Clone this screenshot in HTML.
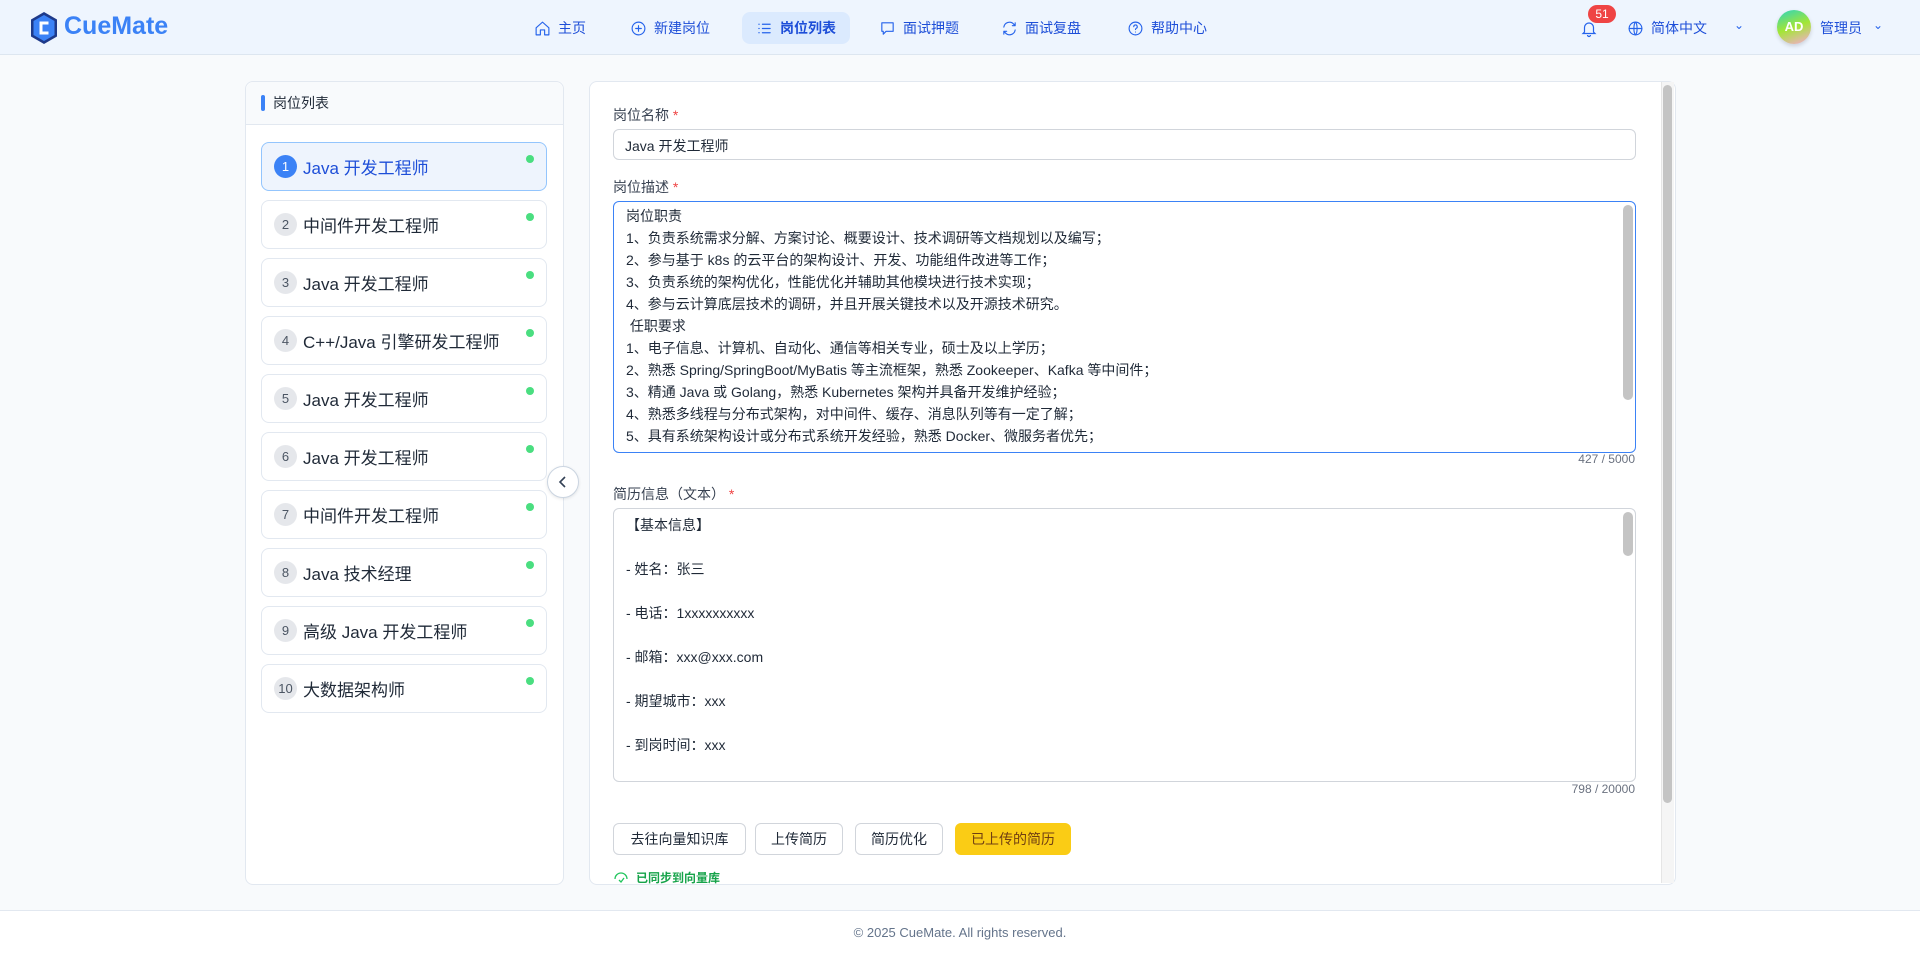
<!DOCTYPE html>
<html><head><meta charset="utf-8"><style>
*{box-sizing:border-box;margin:0;padding:0}
body{width:1920px;height:958px;overflow:hidden;background:#f8fafc;font-family:"Liberation Sans","Noto Sans CJK SC",sans-serif;color:#1f2937;position:relative}
.a{position:absolute}
.hdr{left:0;top:0;width:1920px;height:55px;background:#eef5fe;border-bottom:1px solid #dde6f0}
.nav{top:12px;height:32px;display:flex;align-items:center;font-size:14px;color:#1d4ed8;gap:7px}
.nav svg{width:17px;height:17px;fill:none;stroke:#2563eb;stroke-width:1.6;stroke-linecap:round;stroke-linejoin:round}
.panel{background:#fff;border:1px solid #e2e8f0;border-radius:8px}
.item{left:261px;width:286px;height:49px;border:1px solid #e2e8f0;border-radius:8px;background:#fff;display:flex;align-items:center;padding-left:12px;font-size:17px;color:#1f2937}
.item .n{width:23px;height:23px;border-radius:50%;background:#e5e7eb;color:#4b5563;font-size:13px;display:flex;align-items:center;justify-content:center;margin-right:6px}
.item .d{position:absolute;right:12px;top:12px;width:8px;height:8px;border-radius:50%;background:#4ade80}
.lbl{font-size:14px;color:#374151}
.lbl b{color:#ef4444;font-weight:normal}
.ta{border:1px solid #d1d5db;border-radius:6px;background:#fff;font-size:14px;color:#1f2937;overflow:hidden}
.btn{top:823px;height:32px;border:1px solid #d1d5db;border-radius:6px;background:#fff;font-size:14px;display:flex;align-items:center;justify-content:center;color:#1f2937}
</style></head><body>
<div class="a hdr"></div>
<svg class="a" style="left:29px;top:11px" width="30" height="34" viewBox="0 0 30 34"><path d="M15 1 L28 8.5 V25.5 L15 33 L2 25.5 V8.5 Z" fill="#1e3a8a"/><path d="M15 4 L25.5 10 V24 L15 30 L4.5 24 V10 Z" fill="#3b82f6"/><path d="M19.5 12 H12 V22 H19.5" fill="none" stroke="#fff" stroke-width="3"/></svg>
<div class="a" style="left:64px;top:12px;font-size:25px;font-weight:bold;color:#3b82f6">CueMate</div>

<div class="a nav" style="left:534px"><svg viewBox="0 0 24 24"><path d="M3 11 L12 3 L21 11 V21 H15 V14 H9 V21 H3 Z"/></svg>主页</div>
<div class="a nav" style="left:630px"><svg viewBox="0 0 24 24"><circle cx="12" cy="12" r="9"/><path d="M12 8v8M8 12h8"/></svg>新建岗位</div>
<div class="a" style="left:742px;top:12px;width:108px;height:32px;background:#dbeafe;border-radius:8px"></div>
<div class="a nav" style="left:756px;font-weight:bold"><svg viewBox="0 0 24 24"><path d="M9 6h11M9 12h11M9 18h11M4 6h.5M4 12h.5M4 18h.5"/></svg>岗位列表</div>
<div class="a nav" style="left:879px"><svg viewBox="0 0 24 24"><path d="M4 4h16v12H10l-4 4v-4H4z"/></svg>面试押题</div>
<div class="a nav" style="left:1001px"><svg viewBox="0 0 24 24"><path d="M4 10a8 8 0 0 1 14-4l2 2M20 14a8 8 0 0 1-14 4l-2-2M20 4v4h-4M4 20v-4h4"/></svg>面试复盘</div>
<div class="a nav" style="left:1127px"><svg viewBox="0 0 24 24"><circle cx="12" cy="12" r="9"/><path d="M9.5 9.5a2.5 2.5 0 1 1 3.5 2.3c-.7.4-1 .9-1 1.7M12 17h.01"/></svg>帮助中心</div>

<svg class="a" style="left:1580px;top:19px" width="18" height="20" viewBox="0 0 24 24" fill="none" stroke="#2563eb" stroke-width="1.6"><path d="M6 16V10a6 6 0 0 1 12 0v6l2 2H4z M10 20a2 2 0 0 0 4 0"/></svg>
<div class="a" style="left:1588px;top:5px;width:28px;height:18px;border-radius:9px;background:#ef4444;color:#fff;font-size:12px;text-align:center;line-height:18px">51</div>
<div class="a nav" style="left:1627px"><svg viewBox="0 0 24 24"><circle cx="12" cy="12" r="9"/><path d="M3 12h18M12 3c3 3 3 15 0 18M12 3c-3 3-3 15 0 18"/></svg>简体中文</div>
<div class="a" style="left:1734px;top:18px;font-size:12px;color:#2563eb">&#8964;</div>
<div class="a" style="left:1777px;top:10px;width:34px;height:34px;border-radius:50%;background:linear-gradient(160deg,#2dd4bf,#a3e635 50%,#f9a8d4);color:#fff;font-size:13px;font-weight:bold;text-align:center;line-height:34px;box-shadow:0 2px 4px rgba(0,0,0,.15)">AD</div>
<div class="a nav" style="left:1820px">管理员</div>
<div class="a" style="left:1873px;top:18px;font-size:12px;color:#2563eb">&#8964;</div>

<div class="a panel" style="left:245px;top:81px;width:319px;height:804px"></div>
<div class="a" style="left:246px;top:82px;width:317px;height:43px;background:#f8fafc;border-bottom:1px solid #e2e8f0;border-radius:8px 8px 0 0"></div>
<div class="a" style="left:261px;top:95px;width:4px;height:16px;background:#3b82f6;border-radius:2px"></div>
<div class="a" style="left:273px;top:93px;font-size:14px;color:#1f2937">岗位列表</div>
<div class="a item" style="top:142px;background:#eef4fd;border-color:#93c5fd;color:#1d4ed8"><span class="n" style="background:#3b82f6;color:#fff">1</span>Java 开发工程师<span class="d"></span></div>
<div class="a item" style="top:200px"><span class="n">2</span>中间件开发工程师<span class="d"></span></div>
<div class="a item" style="top:258px"><span class="n">3</span>Java 开发工程师<span class="d"></span></div>
<div class="a item" style="top:316px"><span class="n">4</span>C++/Java 引擎研发工程师<span class="d"></span></div>
<div class="a item" style="top:374px"><span class="n">5</span>Java 开发工程师<span class="d"></span></div>
<div class="a item" style="top:432px"><span class="n">6</span>Java 开发工程师<span class="d"></span></div>
<div class="a item" style="top:490px"><span class="n">7</span>中间件开发工程师<span class="d"></span></div>
<div class="a item" style="top:548px"><span class="n">8</span>Java 技术经理<span class="d"></span></div>
<div class="a item" style="top:606px"><span class="n">9</span>高级 Java 开发工程师<span class="d"></span></div>
<div class="a item" style="top:664px"><span class="n">10</span>大数据架构师<span class="d"></span></div>

<div class="a" style="left:547px;top:466px;width:32px;height:32px;border-radius:50%;background:#fff;border:1.5px solid #cbd5e1;box-shadow:0 1px 3px rgba(0,0,0,.1)"></div>
<svg class="a" style="left:557px;top:475px" width="12" height="14" viewBox="0 0 12 14"><path d="M8 2 L3 7 L8 12" fill="none" stroke="#334155" stroke-width="1.6"/></svg>

<div class="a panel" style="left:589px;top:81px;width:1087px;height:804px;overflow:hidden"></div>
<div class="a" style="left:1661px;top:82px;width:13px;height:801px;background:#f5f5f5;border-left:1px solid #e5e5e5"></div>
<div class="a" style="left:1663px;top:85px;width:9px;height:718px;background:#c4c4c4;border-radius:5px"></div>

<div class="a lbl" style="left:613px;top:105px">岗位名称 <b>*</b></div>
<div class="a ta" style="left:613px;top:129px;width:1023px;height:31px;padding:6px 11px">Java 开发工程师</div>
<div class="a lbl" style="left:613px;top:177px">岗位描述 <b>*</b></div>
<div class="a ta" style="left:613px;top:201px;width:1023px;height:252px;border-color:#3b82f6;padding:3px 12px;line-height:22px;white-space:pre">岗位职责
1、负责系统需求分解、方案讨论、概要设计、技术调研等文档规划以及编写；
2、参与基于 k8s 的云平台的架构设计、开发、功能组件改进等工作；
3、负责系统的架构优化，性能优化并辅助其他模块进行技术实现；
4、参与云计算底层技术的调研，并且开展关键技术以及开源技术研究。
 任职要求
1、电子信息、计算机、自动化、通信等相关专业，硕士及以上学历；
2、熟悉 Spring/SpringBoot/MyBatis 等主流框架，熟悉 Zookeeper、Kafka 等中间件；
3、精通 Java 或 Golang，熟悉 Kubernetes 架构并具备开发维护经验；
4、熟悉多线程与分布式架构，对中间件、缓存、消息队列等有一定了解；
5、具有系统架构设计或分布式系统开发经验，熟悉 Docker、微服务者优先；</div>
<div class="a" style="left:1623px;top:205px;width:10px;height:195px;background:#c4c4c4;border-radius:5px"></div>
<div class="a" style="left:1535px;top:452px;width:100px;text-align:right;font-size:12px;color:#6b7280">427 / 5000</div>

<div class="a lbl" style="left:613px;top:484px">简历信息（文本） <b>*</b></div>
<div class="a ta" style="left:613px;top:508px;width:1023px;height:274px;padding:5px 12px;line-height:22px;white-space:pre">【基本信息】

- 姓名：张三

- 电话：1xxxxxxxxxx

- 邮箱：xxx@xxx.com

- 期望城市：xxx

- 到岗时间：xxx</div>
<div class="a" style="left:1623px;top:512px;width:10px;height:44px;background:#c4c4c4;border-radius:5px"></div>
<div class="a" style="left:1535px;top:782px;width:100px;text-align:right;font-size:12px;color:#6b7280">798 / 20000</div>

<div class="a btn" style="left:613px;width:133px">去往向量知识库</div>
<div class="a btn" style="left:755px;width:88px">上传简历</div>
<div class="a btn" style="left:855px;width:88px">简历优化</div>
<div class="a btn" style="left:955px;width:116px;background:#facc15;border-color:#facc15;color:#713f12">已上传的简历</div>
<svg class="a" style="left:614px;top:872px" width="14" height="12" viewBox="0 0 14 12"><path d="M1 7 A6 6 0 0 1 13 7" fill="none" stroke="#22c55e" stroke-width="1.3"/><path d="M5 8 L7 10 L10 6" fill="none" stroke="#22c55e" stroke-width="1.3"/></svg>
<div class="a" style="left:636px;top:869px;font-size:12px;color:#16a34a;font-weight:bold;height:15px;overflow:hidden">已同步到向量库</div>

<div class="a" style="left:0;top:910px;width:1920px;height:48px;background:#fff;border-top:1px solid #e2e8f0"></div>
<div class="a" style="left:0;top:925px;width:1920px;text-align:center;font-size:13px;color:#64748b">© 2025 CueMate. All rights reserved.</div>
</body></html>
